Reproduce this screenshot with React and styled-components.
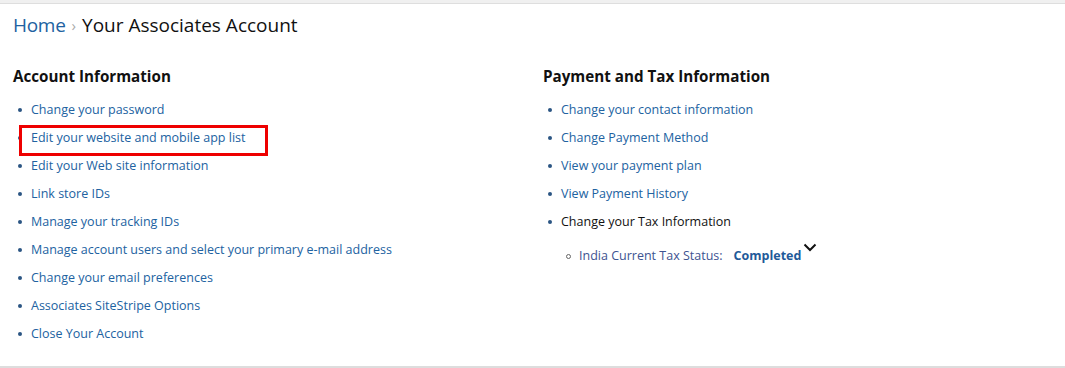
import styled, { createGlobalStyle } from "styled-components";

const GlobalStyle = createGlobalStyle`
  body {
    margin: 0;
    background: #fff;
    font-family: "Open Sans", "Noto Sans", Arial, sans-serif;
    color: #111;
  }
`;

const Page = styled.div`
  height: 368px;
  display: flex;
  flex-direction: column;
  box-sizing: border-box;
  border-bottom: 2px solid #ddd;
  overflow: hidden;
`;

const TopStrip = styled.div`
  height: 3px;
  background: #f0f0f0;
  border-bottom: 1px solid #dedede;
`;

const Content = styled.div`
  padding: 9px 13px 0;
`;

const Breadcrumb = styled.div`
  display: flex;
  align-items: center;
  gap: 6px;
  font-size: 19px;
  line-height: 24px;
  height: 24px;

  a {
    color: #2162a1;
    text-decoration: none;
    letter-spacing: -0.3px;
  }

  .sep {
    color: #aaa;
    font-size: 15px;
  }

  .current {
    color: #111;
  }
`;

const Columns = styled.div`
  display: grid;
  grid-template-columns: 530px 1fr;
  margin-top: 28px;
`;

const Heading = styled.h3`
  margin: 0;
  font-size: 15.2px;
  font-weight: 700;
  line-height: 22px;
  color: #111;
`;

const List = styled.ul`
  list-style: none;
  margin: 9px 0 0;
  padding: 0;
`;

const Item = styled.li`
  position: relative;
  font-size: 12.5px;
  line-height: 28px;
  padding-left: 18px;
  color: ${(p) => (p.$plain ? "#111" : "#2162a1")};

  &::before {
    content: "";
    position: absolute;
    left: 5px;
    top: 12px;
    width: 4px;
    height: 4px;
    border-radius: 50%;
    background: #2b5583;
  }
`;

const SubList = styled.ul`
  list-style: none;
  margin: 6px 0 0;
  padding: 0;
`;

const SubItem = styled.li`
  position: relative;
  display: flex;
  align-items: baseline;
  font-size: 12.5px;
  line-height: 28px;
  padding-left: 18px;
  color: #3d5391;

  &::before {
    content: "";
    position: absolute;
    left: 5px;
    top: 12px;
    width: 3px;
    height: 3px;
    border-radius: 50%;
    border: 1px solid #666;
  }

  strong {
    margin-left: 11px;
    font-weight: 700;
    color: #1f5a99;
  }
`;

const Chevron = styled.svg`
  align-self: flex-start;
  margin-left: 2px;
  margin-top: 1px;
`;

const Highlight = styled.span`
  position: absolute;
  left: 6px;
  top: 1px;
  width: 249px;
  height: 31px;
  box-sizing: border-box;
  border: 3px solid #ee0000;
`;

const accountLinks = [
  "Change your password",
  "Edit your website and mobile app list",
  "Edit your Web site information",
  "Link store IDs",
  "Manage your tracking IDs",
  "Manage account users and select your primary e-mail address",
  "Change your email preferences",
  "Associates SiteStripe Options",
  "Close Your Account",
];

const paymentLinks = [
  "Change your contact information",
  "Change Payment Method",
  "View your payment plan",
  "View Payment History",
];

const App = () => {
  return (
    <>
      <GlobalStyle />
      <Page>
        <TopStrip />
        <Content>
          <Breadcrumb>
            <a href="#">Home</a>
            <span className="sep">›</span>
            <span className="current">Your Associates Account</span>
          </Breadcrumb>
          <Columns>
            <div>
              <Heading>Account Information</Heading>
              <List>
                {accountLinks.map((item, key) => (
                  <Item key={key}>
                    {item}
                    {key === 1 && <Highlight />}
                  </Item>
                ))}
              </List>
            </div>
            <div>
              <Heading>Payment and Tax Information</Heading>
              <List>
                {paymentLinks.map((item, key) => (
                  <Item key={key}>{item}</Item>
                ))}
                <Item $plain>
                  Change your Tax Information
                  <SubList>
                    <SubItem>
                      India Current Tax Status:
                      <strong>Completed</strong>
                      <Chevron width="14" height="9" viewBox="0 0 14 9">
                        <path
                          d="M1.5 1.5 L7 7 L12.5 1.5"
                          fill="none"
                          stroke="#111"
                          strokeWidth="2"
                        />
                      </Chevron>
                    </SubItem>
                  </SubList>
                </Item>
              </List>
            </div>
          </Columns>
        </Content>
      </Page>
    </>
  );
};

export default App;
